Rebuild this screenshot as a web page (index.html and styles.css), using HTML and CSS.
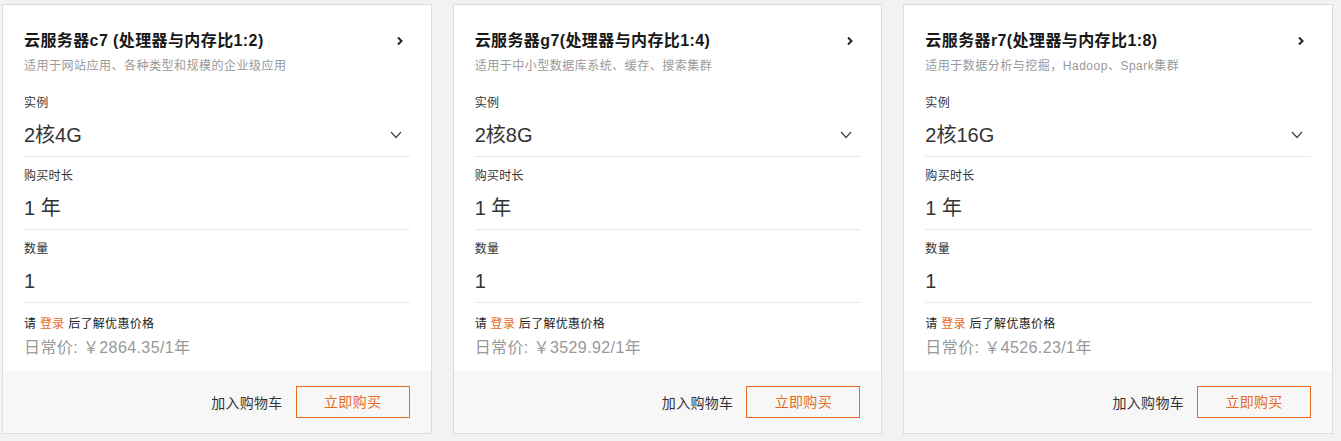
FILE: index.html
```html
<html>
    <head>
        <meta charset="utf-8">
        <link rel="stylesheet" href="styles.css">
    </head>
    <body>
        <div id="cards">
            <div class="card">
                <div class="card-body">
                    <div class="head">
                        <div class="title">云服务器c7 (处理器与内存比1:2)</div>
                        <svg class="arrow" width="8" height="10" viewBox="0 0 8 10"><path d="M2 1.5 L5.5 5 L2 8.5" fill="none" stroke="#222" stroke-width="2"/></svg>
                    </div>
                    <div class="desc">适用于网站应用、各种类型和规模的企业级应用</div>
                    <div class="field first">
                        <div class="label">实例</div>
                        <div class="value select">2核4G
                            <svg width="12" height="8" viewBox="0 0 12 8"><path d="M1 1 L6 6.5 L11 1" fill="none" stroke="#444" stroke-width="1.2"/></svg>
                        </div>
                    </div>
                    <div class="field">
                        <div class="label">购买时长</div>
                        <div class="value">1 年</div>
                    </div>
                    <div class="field">
                        <div class="label">数量</div>
                        <div class="value">1</div>
                    </div>
                    <div class="price">
                        <div class="login">请 <a>登录</a> 后了解优惠价格</div>
                        <div class="normal">日常价: ￥2864.35/1年</div>
                    </div>
                </div>
                <div class="card-foot">
                    <span class="cart">加入购物车</span>
                    <span class="buy">立即购买</span>
                </div>
            </div>

            <div class="card">
                <div class="card-body">
                    <div class="head">
                        <div class="title">云服务器g7(处理器与内存比1:4)</div>
                        <svg class="arrow" width="8" height="10" viewBox="0 0 8 10"><path d="M2 1.5 L5.5 5 L2 8.5" fill="none" stroke="#222" stroke-width="2"/></svg>
                    </div>
                    <div class="desc">适用于中小型数据库系统、缓存、搜索集群</div>
                    <div class="field first">
                        <div class="label">实例</div>
                        <div class="value select">2核8G
                            <svg width="12" height="8" viewBox="0 0 12 8"><path d="M1 1 L6 6.5 L11 1" fill="none" stroke="#444" stroke-width="1.2"/></svg>
                        </div>
                    </div>
                    <div class="field">
                        <div class="label">购买时长</div>
                        <div class="value">1 年</div>
                    </div>
                    <div class="field">
                        <div class="label">数量</div>
                        <div class="value">1</div>
                    </div>
                    <div class="price">
                        <div class="login">请 <a>登录</a> 后了解优惠价格</div>
                        <div class="normal">日常价: ￥3529.92/1年</div>
                    </div>
                </div>
                <div class="card-foot">
                    <span class="cart">加入购物车</span>
                    <span class="buy">立即购买</span>
                </div>
            </div>

            <div class="card">
                <div class="card-body">
                    <div class="head">
                        <div class="title">云服务器r7(处理器与内存比1:8)</div>
                        <svg class="arrow" width="8" height="10" viewBox="0 0 8 10"><path d="M2 1.5 L5.5 5 L2 8.5" fill="none" stroke="#222" stroke-width="2"/></svg>
                    </div>
                    <div class="desc">适用于数据分析与挖掘，Hadoop、Spark集群</div>
                    <div class="field first">
                        <div class="label">实例</div>
                        <div class="value select">2核16G
                            <svg width="12" height="8" viewBox="0 0 12 8"><path d="M1 1 L6 6.5 L11 1" fill="none" stroke="#444" stroke-width="1.2"/></svg>
                        </div>
                    </div>
                    <div class="field">
                        <div class="label">购买时长</div>
                        <div class="value">1 年</div>
                    </div>
                    <div class="field">
                        <div class="label">数量</div>
                        <div class="value">1</div>
                    </div>
                    <div class="price">
                        <div class="login">请 <a>登录</a> 后了解优惠价格</div>
                        <div class="normal">日常价: ￥4526.23/1年</div>
                    </div>
                </div>
                <div class="card-foot">
                    <span class="cart">加入购物车</span>
                    <span class="buy">立即购买</span>
                </div>
            </div>
        </div>
    </body>
</html>
```

FILE: styles.css
```css
body{
    margin: 0;
    background-color: #f2f2f2;
    font-family: "Liberation Sans", Arial, "Noto Sans CJK SC", sans-serif;
    color: #333;
}
#cards{
    display: flex;
    gap: 21px;
    padding: 4px 8px 0 2px;
}
.card{
    flex: 1;
    background-color: #fff;
    border: solid 1px #dcdcdc;
}
.card-body{
    padding: 0 21px;
}
.head{
    display: flex;
    align-items: center;
    justify-content: space-between;
    padding-top: 24px;
}
.title{
    font-size: 16px;
    line-height: 24px;
    font-weight: bold;
    letter-spacing: .4px;
    color: #181818;
}
.arrow{
    margin-right: 6px;
}
.desc{
    margin-top: 4px;
    font-size: 12px;
    line-height: 18px;
    letter-spacing: .5px;
    color: #999;
}
.field{
    padding: 10px 0 7px;
    border-bottom: solid 1px #e8e8e8;
}
.field.first{
    padding-top: 19px;
}
.label{
    font-size: 12px;
    line-height: 18px;
    letter-spacing: .3px;
    color: #333;
}
.value{
    margin-top: 9px;
    font-size: 20px;
    line-height: 28px;
    color: #333;
}
.select{
    display: flex;
    align-items: center;
    justify-content: space-between;
}
.select svg{
    margin-right: 8px;
}
.price{
    padding: 12px 0 11px;
}
.login{
    font-size: 12px;
    line-height: 18px;
    letter-spacing: .3px;
    color: #222;
}
.login a{
    color: #e66b1f;
}
.normal{
    margin-top: 3px;
    font-size: 16px;
    line-height: 24px;
    letter-spacing: .4px;
    color: #999;
}
.card-foot{
    display: flex;
    align-items: center;
    justify-content: flex-end;
    gap: 13px;
    height: 62px;
    padding: 0 21px;
    background-color: #f7f7f7;
}
.cart{
    font-size: 14px;
    letter-spacing: .3px;
    color: #333;
}
.buy{
    box-sizing: border-box;
    width: 114px;
    height: 32px;
    line-height: 30px;
    text-align: center;
    font-size: 14px;
    letter-spacing: .3px;
    color: #e66b1f;
    border: solid 1px #e66b1f;
}
```
